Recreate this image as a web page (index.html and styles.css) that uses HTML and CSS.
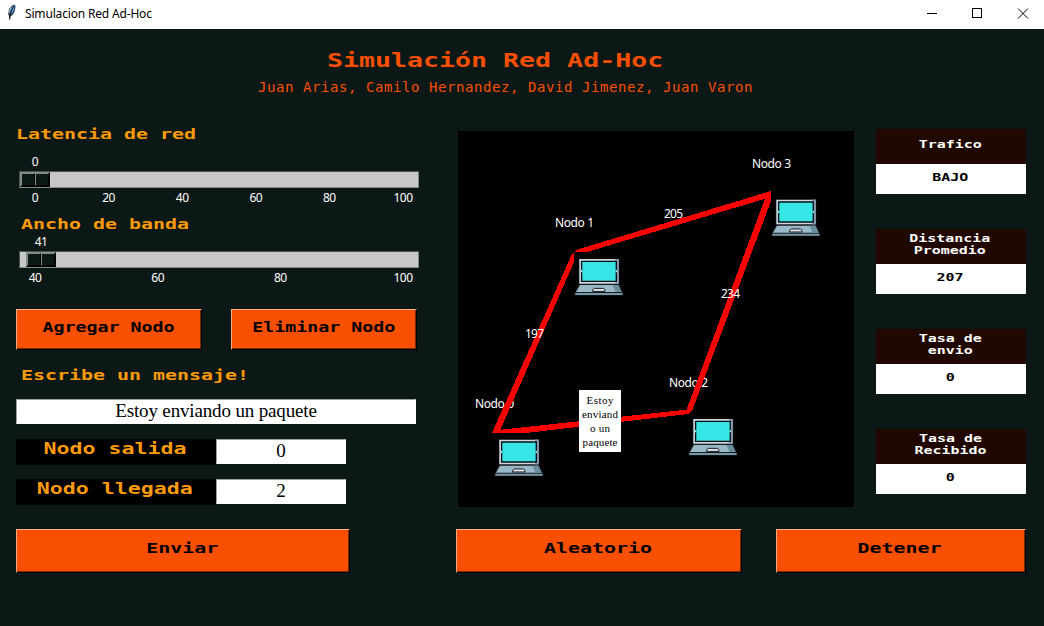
FILE: index.html
```html
<!DOCTYPE html>
<html lang="es">
<head>
<meta charset="utf-8">
<title>Simulacion Red Ad-Hoc</title>
<link rel="stylesheet" href="styles.css">
</head>
<body>
<div class="titlebar">
  <svg class="feather" width="10" height="17" viewBox="0 0 10 17">
    <path d="M3 15.5 1.2 10 2 5 5 1.500 8 .5 8.500 3 7.500 8 5 11.500 3.500 12Z" fill="#26384d"/>
    <path d="M3 9 3.500 5 6 2 7.500 1.500 7 6 4.500 10Z" fill="#5b9fe0"/>
    <path d="M2.500 15.500 3.500 9 6.500 2.500" fill="none" stroke="#111" stroke-width="1"/>
    <path d="M2 9.500 2.500 6 4.500 3" fill="none" stroke="#b8cfe2" stroke-width=".8"/>
  </svg>
  <span class="caption">Simulacion Red Ad-Hoc</span>
  <svg class="controls" width="104" height="12" viewBox="0 0 104 12" fill="none" stroke="#000">
    <path d="M1 5.500H11"/><rect x="46.500" y=".5" width="9" height="9"/><path d="M92 .5 102 10.500M102 .5 92 10.500"/>
  </svg>
</div>
<header class="heading">
  <h1 class="title"><span class="px px-title">Simulación Red Ad-Hoc</span></h1>
  <p class="authors">Juan Arias, Camilo Hernandez, David Jimenez, Juan Varon</p>
</header>
<main class="main">
  <section class="controls-col">
    <div class="label"><span class="px px-label">Latencia de red</span></div>
    <div class="scale scale-first">
      <div class="value">0</div>
      <div class="trough"><div class="thumb"><i></i><i></i></div></div>
      <div class="ticks"><span>0</span><span>20</span><span>40</span><span>60</span><span>80</span><span>100</span></div>
    </div>
    <div class="label indent"><span class="px px-label">Ancho de banda</span></div>
    <div class="scale scale-second">
      <div class="value value-bw">41</div>
      <div class="trough trough-bw"><div class="thumb"><i></i><i></i></div></div>
      <div class="ticks"><span>40</span><span>60</span><span>80</span><span>100</span></div>
    </div>
    <div class="node-buttons">
      <button class="btn"><span class="px px-small">Agregar Nodo</span></button>
      <button class="btn"><span class="px px-small">Eliminar Nodo</span></button>
    </div>
    <div class="label indent"><span class="px px-label">Escribe un mensaje!</span></div>
    <div class="entry message">Estoy enviando un paquete</div>
    <div class="field"><div class="field-name"><span class="px px-field">Nodo salida</span></div><div class="entry">0</div></div>
    <div class="field"><div class="field-name"><span class="px px-field">Nodo llegada</span></div><div class="entry">2</div></div>
  </section>
  <svg class="network" width="396" height="376" viewBox="458 131 396 376">
    <defs>
      <g id="laptop">
        <path d="M13 1H135V78L147 103V111H0V103L13 78Z" fill="#15191c"/>
        <path d="M15 1H133V75H15Z" fill="#c9d9e4"/>
        <path d="M122 1H133V75H122Z" fill="#8499ae"/>
        <path d="M20 6H128V70H20Z" fill="#090e10"/>
        <path d="M24 10H124V66H24Z" fill="#36e5e5"/>
        <path d="M20 34H24V41H20ZM124 34H128V41H124Z" fill="#7df2f2"/>
        <path d="M17 79H132L142 100H5Z" fill="#9ab8c8"/>
        <path d="M114 79H132L142 100H124Z" fill="#678e9a"/>
        <path d="M3 103H145V109H3Z" fill="#7799a7"/>
        <path d="M55 98V93L60 89H87L92 93V98Z" fill="#e1e9ee" stroke="#15191c" stroke-width="3"/>
      </g>
    </defs>
    <g class="canvas-text">
      <text x="475" y="408" textLength="39">Nodo 0</text>
      <text x="555" y="227" textLength="39">Nodo 1</text>
      <text x="669" y="387" textLength="39">Nodo 2</text>
      <text x="752" y="168" textLength="39">Nodo 3</text>
    </g>
    <g fill="#f00" shape-rendering="crispEdges">
      <path d="M492 433 572 254 574 252V262L499 433Z"/>
      <path d="M574 252 576 250 771 191V197L587 252Z"/>
      <path d="M771 192V201L692 411 688 414 686 411 766 196Z"/>
      <path d="M493 433 498 430 688 409.500V414L526 433Z"/>
    </g>
    <g class="canvas-text">
      <text x="525" y="338" textLength="19">197</text>
      <text x="664" y="218" textLength="19">205</text>
      <text x="721" y="298" textLength="19">234</text>
    </g>
    <use href="#laptop" transform="translate(494.300 439.300) scale(.3333)"/>
    <use href="#laptop" transform="translate(574.300 258.700) scale(.3333)"/>
    <use href="#laptop" transform="translate(688.300 418.700) scale(.3333)"/>
    <use href="#laptop" transform="translate(771.300 199.300) scale(.3333)"/>
    <rect x="579" y="390" width="42" height="62" fill="#fff"/>
    <g class="packet">
      <text x="600" y="404" textLength="27">Estoy</text>
      <text x="600" y="418" textLength="36">enviand</text>
      <text x="600" y="432" textLength="20">o un</text>
      <text x="600" y="446" textLength="35">paquete</text>
    </g>
  </svg>
  <aside class="stats">
    <div class="stat"><div class="stat-name"><span class="px px-stat">Trafico</span></div><div class="stat-value"><span class="px px-stat">BAJO</span></div></div>
    <div class="stat"><div class="stat-name"><span class="px px-stat">Distancia<br>Promedio</span></div><div class="stat-value"><span class="px px-stat">207</span></div></div>
    <div class="stat"><div class="stat-name"><span class="px px-stat">Tasa de<br>envio</span></div><div class="stat-value"><span class="px px-stat">0</span></div></div>
    <div class="stat"><div class="stat-name"><span class="px px-stat">Tasa de<br>Recibido</span></div><div class="stat-value"><span class="px px-stat">0</span></div></div>
  </aside>
</main>
<footer class="actions">
  <button class="btn send"><span class="px px-label">Enviar</span></button>
  <button class="btn random"><span class="px px-label">Aleatorio</span></button>
  <button class="btn stop"><span class="px px-label">Detener</span></button>
</footer>
</body>
</html>
```
FILE: styles.css
```css
* { box-sizing: border-box; }
body {
  margin: 0;
  width: 1044px;
  height: 626px;
  overflow: hidden;
  background: #0b1815;
  font-family: "Noto Sans", sans-serif;
  display: flex;
  flex-direction: column;
}
.titlebar {
  height: 29px;
  flex: none;
  display: flex;
  background: #fff;
  color: #000;
  padding-left: 7px;
}
.feather { margin-top: 4px; }
.caption {
  margin-left: 8px;
  font-size: 12px;
  line-height: 27px;
  letter-spacing: -0.17px;
}
.controls { margin: 8px 14px 0 auto; }

/* Wide pixel-style lettering: monospace stretched horizontally */
.px {
  display: inline-block;
  font-family: "DejaVu Sans Mono", monospace;
  font-weight: bold;
  white-space: nowrap;
}
.px-title { font-size: 19px; transform: scaleX(1.399); }
.px-label { font-size: 14px; transform: scaleX(1.424); }
.px-small { font-size: 14px; transform: scaleX(1.305); }
.px-field { font-size: 16px; transform: scaleX(1.35); }
.px-stat { font-size: 11px; line-height: 12px; transform: scaleX(1.36); }

.heading {
  height: 96px;
  flex: none;
  color: #f94f00;
  padding: 18px 33px 0 0;
  text-align: center;
}
.title { margin: 0; padding-right: 20px; height: 26px; line-height: 26px; font-size: 19px; }
.authors {
  margin: 4px 0 0;
  font: 14px/20px "DejaVu Sans Mono", monospace;
  letter-spacing: 0.57px;
}
.main { height: 404px; flex: none; display: flex; padding-left: 16px; }
.controls-col { width: 400px; height: 404px; }
.label { height: 18px; line-height: 18px; color: #ff9b08; font-size: 14px; }
.label .px { transform-origin: left; }
.label.indent { padding-left: 5px; }

.scale { width: 400px; margin-left: 3px; color: #fff; font-size: 12px; }
.scale-first { height: 72px; padding-top: 10px; }
.scale-second { height: 54px; }
.value { height: 18px; line-height: 17px; width: 32px; text-align: center; letter-spacing: -0.5px; }
.value-bw { width: 44px; }
.trough {
  width: 400px;
  height: 17px;
  background: #c8c8c8;
  border: 1px solid;
  border-color: #4b5452 #858b89 #858b89 #4b5452;
}
.trough-bw { padding-left: 6px; }
.thumb {
  width: 30px;
  height: 15px;
  display: flex;
  border: 1px solid;
  border-color: #858b89 #000 #000 #858b89;
}
.thumb i {
  flex: 1;
  background: #0b1815;
  border: 1px solid;
  border-color: #858b89 #000 #000 #858b89;
}
.ticks { display: flex; justify-content: space-between; padding: 0 1px; height: 19px; line-height: 20px; letter-spacing: -0.5px; }
.ticks span { width: 30px; text-align: center; }

.node-buttons { display: flex; gap: 29px; margin: 22px 0 16px; }
.node-buttons .btn { width: 186px; height: 41px; flex: none; }
.btn {
  padding: 0 0 6px;
  color: #000;
  background: #f94f00;
  border: 1px solid;
  border-color: #ffab86 #000 #000 #ffab86;
  box-shadow: inset -1px -1px #7d2800;
  font: 14px/18px "DejaVu Sans Mono", monospace;
}
.entry {
  width: 130px;
  height: 25px;
  background: #fff;
  border: 1px solid;
  border-color: #9d9d9d #fff #fff #9d9d9d;
  color: #000;
  font: 19px/22px "Liberation Serif", serif;
  text-align: center;
}
.message { width: 400px; margin: 15px 0; letter-spacing: -0.15px; }
.field { display: flex; height: 26px; margin-bottom: 14px; }
.field-name { width: 200px; height: 26px; line-height: 19px; font-size: 16px; background: #000; color: #ff9b08; text-align: center; padding-right: 2px; }

.network { display: block; margin: 6px 22px 0 42px; background: #000; }
.canvas-text { font: 12px "Noto Sans", sans-serif; fill: #fff; }
.packet { font: 11px "Liberation Serif", serif; fill: #000; text-anchor: middle; }

.stats { width: 150px; padding-top: 4px; display: flex; flex-direction: column; gap: 35px; }
.stat { height: 65px; text-align: center; }
.stat-name, .stat-value { display: flex; justify-content: center; align-items: center; padding-right: 2px; }
.stat-name { height: 35px; background: #200700; color: #fff; padding-bottom: 4px; }
.stat-value { height: 30px; background: #fff; color: #000; padding-bottom: 3px; }

.actions { display: flex; padding-left: 16px; }
.actions .btn { height: 44px; padding-right: 2px; }
.send { width: 334px; }
.random { width: 286px; margin-left: 106px; }
.stop { width: 250px; margin-left: 34px; }
```
